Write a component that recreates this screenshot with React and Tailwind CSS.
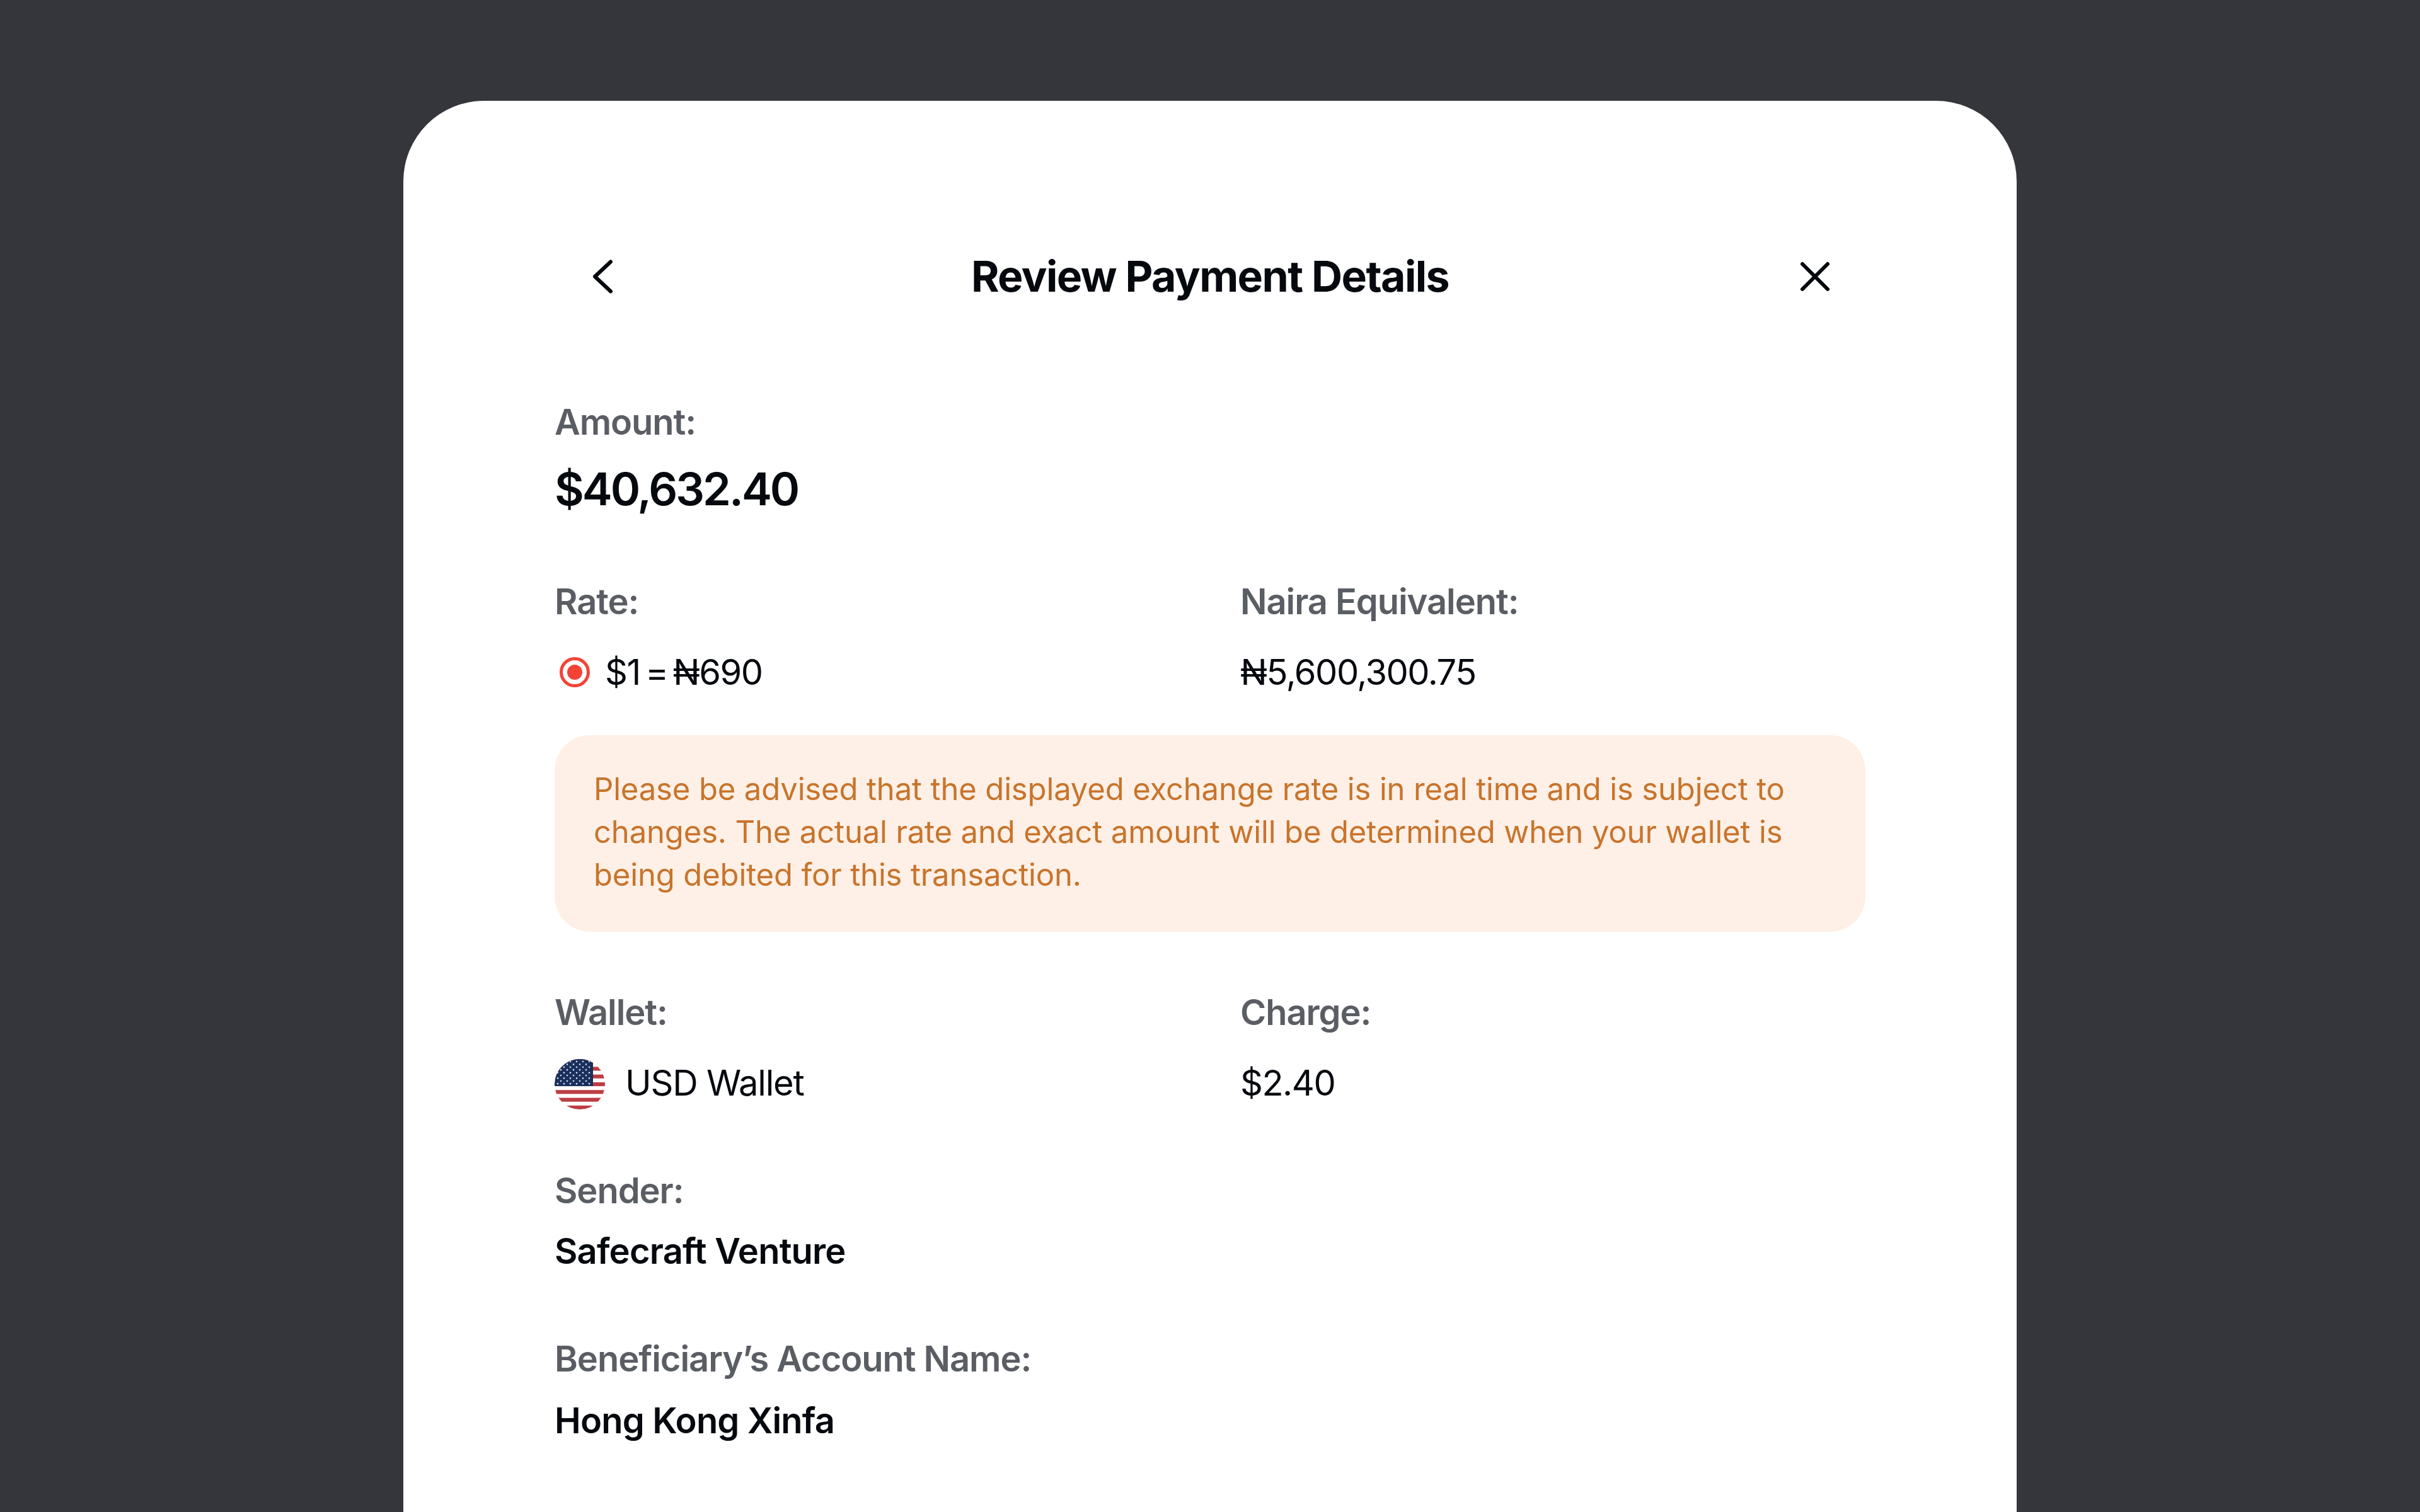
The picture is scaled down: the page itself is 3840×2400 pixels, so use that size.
import React from 'react';

function UsFlag() {
    const stars = [];
    for (let row = 0; row < 9; row++) {
        const count = row % 2 === 0 ? 6 : 5;
        for (let col = 0; col < count; col++) {
            stars.push({ x: (row % 2 === 0 ? 5 : 10) + col * 10, y: 4 + row * 4.4 });
        }
    }
    return (
        <svg width="80" height="80" viewBox="0 0 80 80" className="shrink-0">
            <defs>
                <clipPath id="flag-circle">
                    <circle cx="40" cy="40" r="40" />
                </clipPath>
            </defs>
            <g clipPath="url(#flag-circle)">
                <rect width="80" height="80" fill="#ffffff" />
                {[0, 2, 4, 6, 8, 10, 12].map((i) => (
                    <rect key={i} x="0" y={i * 6.154} width="80" height="6.154" fill="#BD3D44" />
                ))}
                <rect x="0" y="0" width="61" height="43" fill="#192F5D" />
                {stars.map((s, i) => (
                    <polygon
                        key={i}
                        transform={`translate(${s.x} ${s.y})`}
                        points="0,-1.9 0.5,-0.6 1.8,-0.6 0.8,0.2 1.2,1.6 0,0.8 -1.2,1.6 -0.8,0.2 -1.8,-0.6 -0.5,-0.6"
                        fill="#ffffff"
                    />
                ))}
            </g>
        </svg>
    );
}

function Label({ children }) {
    return <div className="text-[56px] leading-[68px] font-semibold tracking-[-1.05px] text-[#5A5E64]">{children}</div>;
}

function StrongValue({ children, className }) {
    return <div className={`text-[56px] leading-[68px] font-semibold tracking-[-0.8px] text-[#05090E] ${className}`}>{children}</div>;
}

function App() {
    return (
        <div className="w-full h-[2400px] overflow-hidden bg-[#35363B] pt-[160px] font-['Inter',sans-serif]">
            <div className="w-[2560px] h-[2240px] mx-auto bg-white rounded-t-[128px] px-[240px] pt-[237px]">
                <div className="flex items-center justify-between h-[84px]">
                    <div className="w-[160px] flex justify-center">
                        <svg width="40" height="60" viewBox="0 0 40 60" fill="none" className="-ml-[8px]">
                            <path d="M33 6.5 L8 30 L33 53.5" stroke="#05090E" strokeWidth="6" strokeLinecap="round" strokeLinejoin="round" />
                        </svg>
                    </div>
                    <div className="text-[68px] leading-[84px] font-bold tracking-[-1.6px] text-[#05090E] -translate-y-[1px]">Review Payment Details</div>
                    <div className="w-[160px] flex justify-center">
                        <svg width="52" height="52" viewBox="0 0 52 52" fill="none">
                            <path d="M6 6 L46 46 M46 6 L6 46" stroke="#05090E" strokeWidth="6" strokeLinecap="round" />
                        </svg>
                    </div>
                </div>

                <div className="mt-[155px]">
                    <Label>Amount:</Label>
                    <div className="text-[72px] leading-[96px] font-semibold tracking-[-3px] text-[#05090E] mt-[24px]">$40,632.40</div>
                </div>

                <div className="grid grid-cols-2 gap-x-[96px] mt-[97px]">
                    <div>
                        <Label>Rate:</Label>
                        <div className="flex items-center gap-[24px] mt-[44px]">
                            <svg width="48" height="48" viewBox="0 0 48 48" className="ml-[8px] shrink-0">
                                <circle cx="24" cy="24" r="21.5" fill="none" stroke="#F44336" strokeWidth="5" />
                                <circle cx="24" cy="24" r="12" fill="#F44336" />
                            </svg>
                            <div className="text-[56px] leading-[68px] tracking-[-1.5px] [word-spacing:-6px] text-[#05090E]">$1 = ₦690</div>
                        </div>
                    </div>
                    <div>
                        <Label>Naira Equivalent:</Label>
                        <div className="mt-[44px]">
                            <div className="text-[56px] leading-[68px] tracking-[-1.5px] text-[#05090E]">₦5,600,300.75</div>
                        </div>
                    </div>
                </div>

                <div className="mt-[66px] bg-[#FEF0E6] rounded-[56px] px-[62px] pt-[52px] pb-[56px] text-[49px] leading-[68px] tracking-[-0.15px] text-[#C8742C]">
                    Please be advised that the displayed exchange rate is in real time and is subject to changes. The actual rate and exact amount will be determined when your wallet is being debited for this transaction.
                </div>

                <div className="grid grid-cols-2 gap-x-[96px] mt-[94px]">
                    <div>
                        <Label>Wallet:</Label>
                        <div className="flex items-center gap-[32px] mt-[40px]">
                            <UsFlag />
                            <div className="text-[56px] leading-[68px] tracking-[-1.2px] text-[#05090E] mb-[4px]">USD Wallet</div>
                        </div>
                    </div>
                    <div>
                        <Label>Charge:</Label>
                        <div className="mt-[44px]">
                            <div className="text-[56px] leading-[68px] tracking-[-1.5px] text-[#05090E]">$2.40</div>
                        </div>
                    </div>
                </div>

                <div className="mt-[95px]">
                    <Label>Sender:</Label>
                    <StrongValue className="mt-[28px]">Safecraft Venture</StrongValue>
                </div>

                <div className="mt-[103px]">
                    <Label>Beneficiary’s Account Name:</Label>
                    <StrongValue className="mt-[30px]">Hong Kong Xinfa</StrongValue>
                </div>
            </div>
        </div>
    );
}

export default App;
